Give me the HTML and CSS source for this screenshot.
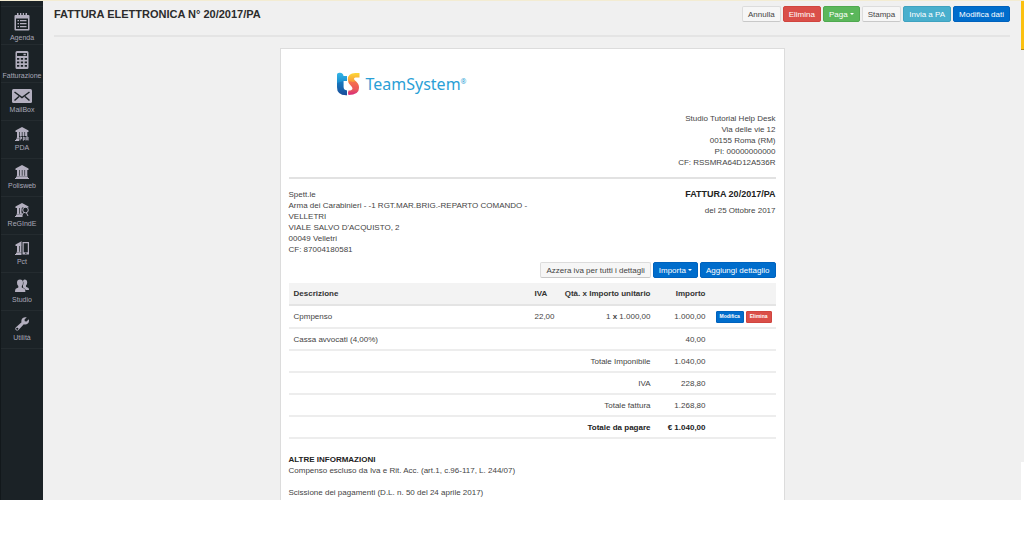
FILE: index.html
```html
<!DOCTYPE html>
<html lang="it">
<head>
<meta charset="utf-8">
<meta name="viewport" content="width=device-width, initial-scale=1">
<title>Fattura elettronica N° 20/2017/PA</title>
<link rel="stylesheet" href="styles.css">
</head>
<body>
<svg class="defs" aria-hidden="true">
  <symbol id="bank" viewBox="0 0 14 14">
    <path d="M7 0 13.500 3.500V5H.5V3.500zM1 12h12v1H1zM0 13h14v1H0zM2 5h2.200v6H2zM4.900 5h1.900v6H4.900zM7.500 5h1.900v6H7.500zM10.100 5h2.200v6h-2.200zM1.500 10.800h11v.9h-11z"/>
  </symbol>
</svg>
<div class="app">
  <nav class="sidebar" aria-label="Menu principale">
    <a class="nav-item" href="#agenda">
      <svg class="nav-icon tall" viewBox="0 0 16 18"><path fill-rule="evenodd" d="M3 0h1.500v2H6V0h1.300v2h1.500V0H10v2h1.500V0H13v2h1.500q1 0 1 1v13.500q0 1-1 1h-13q-1 0-1-1V3q0-1 1-1H3zM2 5.500V16h12V5.500zM3.500 7H5v1.300H3.500zM6 7h6.500v1.300H6zM3.500 10H5v1.300H3.500zM6 10h6.500v1.300H6zM3.500 13H5v1.300H3.500zM6 13h6.500v1.300H6z"/></svg>
      <span>Agenda</span>
    </a>
    <a class="nav-item" href="#fatturazione">
      <svg class="nav-icon tall" viewBox="0 0 16 18"><path fill-rule="evenodd" d="M3 0h10q1.500 0 1.500 1.500v15q0 1.500-1.500 1.500H3q-1.500 0-1.500-1.500v-15Q1.500 0 3 0zM3 2v3h10V2zM9.500 2.800h2.300v1.400H9.500zM3 7v1.800h2.300V7zM6.800 7v1.800h2.300V7zM10.700 7v1.800H13V7zM3 10.500v1.800h2.300v-1.800zM6.800 10.500v1.800h2.300v-1.800zM10.700 10.500v1.800H13v-1.800zM3 14v1.800h2.300V14zM6.800 14v1.800h2.300V14zM10.700 14v1.800H13V14z"/></svg>
      <span>Fatturazione</span>
    </a>
    <a class="nav-item" href="#mailbox">
      <svg class="nav-icon wide" viewBox="0 0 20 14"><rect width="20" height="14" rx="1.500"/><path class="cut" d="M2.500 3 10 8.500 17.500 3M2.500 11.500 7 7.500M17.500 11.500 13 7.500"/></svg>
      <span>MailBox</span>
    </a>
    <a class="nav-item" href="#pda">
      <svg class="nav-icon" viewBox="0 0 14 14"><use href="#bank"/><rect class="hole" x="4" y="9" width="10" height="5"/><path class="line" d="M5 13.500V10h1.500v1.800H5M8.300 13.500V10H9q1.300 1.700 0 3h-.7M11 13.500V10h2v3.500M11 12h2"/></svg>
      <span>PDA</span>
    </a>
    <a class="nav-item" href="#polisweb">
      <svg class="nav-icon" viewBox="0 0 14 14"><use href="#bank"/></svg>
      <span>Polisweb</span>
    </a>
    <a class="nav-item" href="#reginde">
      <svg class="nav-icon" viewBox="0 0 14 14"><use href="#bank"/><path class="hole" d="M7 4.500H14V14H7.500V11L6.500 9z"/><circle class="line" cx="10.500" cy="7" r="2.800"/><path class="line" d="M8.700 9.300 6 13.500M11.500 10l1.500 3"/></svg>
      <span>ReGIndE</span>
    </a>
    <a class="nav-item" href="#pct">
      <svg class="nav-icon" viewBox="0 0 14 14"><use href="#bank"/><rect class="hole" x="6.500" y="0" width="7.500" height="14"/><path fill-rule="evenodd" d="M7.500 1H14v12.500H7.500zM8.700 2.300v8.900h4.100V2.300zM10 11.800v.9h1.500v-.9z"/></svg>
      <span>Pct</span>
    </a>
    <a class="nav-item" href="#studio">
      <svg class="nav-icon" viewBox="0 0 14 14"><path d="M9.500.5q2.700 0 2.700 3 0 2-1.200 3v1.300l2.500 1.200q.5.500.5 2H9.500L8 8.500V2q.3-1.500 1.500-1.500z"/><path class="edge" d="M5 .5q3 0 3 3.300Q8 6 6.800 7v1.500l2.700 1.300q.9.700.9 3.200H0q0-2.500.7-3.200l2.600-1.300V7Q2 6 2 3.800 2 .5 5 .5z"/></svg>
      <span>Studio</span>
    </a>
    <a class="nav-item" href="#utilita">
      <svg class="nav-icon" viewBox="0 0 14 14"><path fill-rule="evenodd" d="M11.800.3 9.500 2.600l.3 1.700 1.700.3L13.800 2.300q.7 2.500-1 4.200-1.700 1.500-4 .8L3.500 13q-1.300 1-2.600 0-1.200-1.200-.2-2.600L6.500 5.200q-.6-2.200 1-3.900Q9.300-.3 11.800.3zM2.200 10.800a1 1 0 1 0 .1 0z"/></svg>
      <span>Utilità</span>
    </a>
  </nav>

  <main class="content">
    <header class="page-head">
      <h1 class="page-title">FATTURA ELETTRONICA N° 20/2017/PA</h1>
      <div class="actions">
        <button class="btn" type="button">Annulla</button>
        <button class="btn danger" type="button">Elimina</button>
        <button class="btn success" type="button">Paga <i class="caret"></i></button>
        <button class="btn" type="button">Stampa</button>
        <button class="btn info" type="button">Invia a PA</button>
        <button class="btn primary" type="button">Modifica dati</button>
      </div>
    </header>

    <article class="invoice">
      <div class="brand">
        <svg class="brand-mark" viewBox="0 0 24 24" aria-hidden="true">
          <defs>
            <linearGradient id="blue" x1="0" y1="0" x2="0" y2="1"><stop offset="0" stop-color="#35b6e6"/><stop offset=".5" stop-color="#1688cd"/><stop offset="1" stop-color="#1b4f9c"/></linearGradient>
            <linearGradient id="warm" x1="0" y1="0" x2="0" y2="1"><stop offset="0" stop-color="#fdd835"/><stop offset=".5" stop-color="#f68a3c"/><stop offset="1" stop-color="#d9277b"/></linearGradient>
          </defs>
          <path fill="url(#blue)" d="M1 2.500Q1 .5 4 .8q3.300.4 3.500 3.200H11v5H7.500v6q0 3 3.500 3.500v4.700Q1 23.500 1 15z"/>
          <path fill="#1a4a94" d="M1 11 7.500 9v6q0 3 3.500 3.500v4.700Q1 23.500 1 15z" opacity=".35"/>
          <path fill="url(#warm)" d="M23.500 1v4.500H19.500q-1.700 0-1.500 1.500.2 1 1.800 2.300 3.200 2.700 3.200 6.700 0 7-10.500 7-1-2 0-4.500 4 0 4-2.300 0-1.200-1.700-2.700-3-2.500-3-6 0-6.500 7.500-6.500z"/>
          <path fill="#ef4a62" d="M12.300 9.300Q14 9 17 10l2.800-.7q3.200 2.700 3.200 6.700l-6.500.2q0-1.200-1.700-2.700-1.700-1.700-2.500-4.200z" opacity=".5"/>
        </svg>
        <span class="brand-name">TeamSystem<sup>®</sup></span>
      </div>
      <address class="sender">
        Studio Tutorial Help Desk<br>
        Via delle vie 12<br>
        00155 Roma (RM)<br>
        PI: 00000000000<br>
        CF: RSSMRA64D12A536R
      </address>

      <section class="parties">
        <address class="customer">
          Spett.le<br>
          Arma dei Carabinieri - -1 RGT.MAR.BRIG.-REPARTO COMANDO -<br>
          VELLETRI<br>
          VIALE SALVO D'ACQUISTO, 2<br>
          00049 Velletri<br>
          CF: 87004180581
        </address>
        <div class="number">
          <h2 class="number-title">FATTURA 20/2017/PA</h2>
          <p class="number-date">del 25 Ottobre 2017</p>
        </div>
      </section>

      <div class="actions detail-actions">
        <button class="btn" type="button">Azzera iva per tutti i dettagli</button>
        <button class="btn primary" type="button">Importa <i class="caret"></i></button>
        <button class="btn primary" type="button">Aggiungi dettaglio</button>
      </div>

      <table class="lines">
        <colgroup><col><col class="col-vat"><col class="col-qty"><col class="col-amount"><col class="col-tools"></colgroup>
        <thead>
          <tr><th>Descrizione</th><th>IVA</th><th class="num">Qtà. x Importo unitario</th><th class="num">Importo</th><th></th></tr>
        </thead>
        <tbody>
          <tr class="item">
            <td>Cpmpenso</td><td>22,00</td><td class="num">1 <b>x</b> 1.000,00</td><td class="num">1.000,00</td>
            <td><div class="tools"><button class="btn mini primary" type="button">Modifica</button><button class="btn mini danger" type="button">Elimina</button></div></td>
          </tr>
          <tr><td>Cassa avvocati (4,00%)</td><td></td><td></td><td class="num">40,00</td><td></td></tr>
          <tr><td class="num" colspan="3">Totale Imponibile</td><td class="num">1.040,00</td><td></td></tr>
          <tr><td class="num" colspan="3">IVA</td><td class="num">228,80</td><td></td></tr>
          <tr><td class="num" colspan="3">Totale fattura</td><td class="num">1.268,80</td><td></td></tr>
          <tr class="due"><td class="num" colspan="3">Totale da pagare</td><td class="num">€ 1.040,00</td><td></td></tr>
        </tbody>
      </table>

      <section class="notes">
        <h3 class="notes-title">ALTRE INFORMAZIONI</h3>
        <p>Compenso escluso da Iva e Rit. Acc. (art.1, c.96-117, L. 244/07)</p>
        <p class="notes-gap">Scissione dei pagamenti (D.L. n. 50 del 24 aprile 2017)</p>
      </section>
    </article>
  </main>
  <div class="rail" aria-hidden="true"><div class="rail-tab"></div><div class="rail-end"></div></div>
</div>
</body>
</html>
```
FILE: styles.css
```css
* { box-sizing: border-box; }

body {
  margin: 0;
  background: #fff;
  color: #444;
  font: 8px/11px "Liberation Sans", Arial, sans-serif;
}

h1, h2, h3, p { margin: 0; }
address { font-style: normal; }
.defs { position: absolute; width: 0; height: 0; }

.app {
  display: flex;
  background: #f0f0f0;
  border-top: 1px solid #f3ecd2;
}

/* Sidebar */
.sidebar {
  flex: none;
  width: 43px;
  padding-top: 5px;
  background: #1b2226;
  border-left: 1px solid #12181b;
}

.nav-item {
  display: flex;
  flex-direction: column;
  align-items: center;
  gap: 1px;
  height: 38px;
  padding-top: 6px;
  border-top: 1px solid #242b2f;
  color: #a9a8b8;
  font-size: 7px;
  text-decoration: none;
  white-space: nowrap;
}
.nav-item:last-child { height: 39px; border-bottom: 1px solid #242b2f; }

.nav-icon { flex: none; width: 14px; height: 14px; fill: #b3afbf; }
.nav-icon.tall { width: 16px; height: 18px; }
.nav-icon.wide { width: 20px; }
.nav-icon .cut { fill: none; stroke: #1b2226; stroke-width: 1.5; }
.nav-icon .hole { fill: #1b2226; }
.nav-icon .line { fill: none; stroke: #b3afbf; stroke-width: 1; }
.nav-icon .edge { stroke: #1b2226; stroke-width: 1; paint-order: stroke; }

/* Page header */
.content { flex: 1; min-width: 0; padding: 0 11px; }

.page-head {
  display: flex;
  justify-content: space-between;
  align-items: flex-start;
  padding: 5px 0 13px;
  border-bottom: 2px solid #e4e4e4;
}

.page-title { color: #2b2b2b; font-size: 11px; line-height: 16px; }

.actions { display: flex; gap: 2px; }

.btn {
  display: inline-flex;
  align-items: center;
  gap: 2px;
  height: 16px;
  padding: 0 5px;
  border: 1px solid #dcdcdc;
  border-bottom-color: #c8c8c8;
  border-radius: 2px;
  background: #f6f6f6;
  color: #444;
  font: inherit;
  white-space: nowrap;
}
.btn.danger { background: #da4f49; border-color: #d0453f; color: #fff; }
.btn.success { background: #5bb75b; border-color: #4fa94f; color: #fff; }
.btn.info { background: #49afcd; border-color: #3fa2c0; color: #fff; }
.btn.primary { background: #006dcc; border-color: #0062bd; color: #fff; }
.btn.mini {
  height: 12px;
  padding: 0 3px;
  border-radius: 1px;
  font-size: 5px;
  font-weight: bold;
}

.caret {
  border: 2px solid transparent;
  border-top-color: currentColor;
  border-bottom: 0;
}

/* Invoice sheet */
.invoice {
  max-width: 505px;
  margin: 11px auto 0;
  padding: 23px 8px 2px;
  background: #fff;
  border: 1px solid #dcdcdc;
  border-bottom: 0;
}

.brand { display: flex; align-items: center; gap: 6px; padding-left: 47px; }
.brand-mark { flex: none; width: 24px; height: 24px; }
.brand-name {
  color: #2a9fd6;
  font: 16px/24px "Noto Sans", "Open Sans", sans-serif;
}
.brand-name sup { font-size: 7px; line-height: 7px; }

.sender {
  padding: 17px 0 9px;
  border-bottom: 2px solid #e2e2e2;
  text-align: right;
}

.parties { display: flex; justify-content: space-between; padding-top: 10px; }
.number { text-align: right; }
.number-title { color: #222; font-size: 9px; line-height: 11px; }
.number-date { margin-top: 5px; }

.detail-actions { justify-content: flex-end; padding: 7px 0 5px; }

.lines { width: 100%; border-spacing: 0; table-layout: fixed; }
.lines th, .lines td {
  height: 22px;
  padding: 0 5px;
  border-bottom: 2px solid #ededed;
  text-align: left;
  vertical-align: middle;
  white-space: nowrap;
}
.lines th { height: 23px; background: #f3f3f3; border-color: #e4e4e4; color: #333; }
.lines .item td { height: 23px; }
.lines .num { text-align: right; }
.lines .due { color: #222; font-weight: bold; }
.col-vat { width: 27px; }
.col-qty { width: 99px; }
.col-amount { width: 55px; }
.col-tools { width: 65px; }
.tools { display: flex; gap: 2px; }

.notes { padding-top: 15px; }
.notes-title { color: #222; font-size: 8px; line-height: 11px; }
.notes-gap { margin-top: 11px; }

/* Right edge */
.rail {
  flex: none;
  display: flex;
  flex-direction: column;
  justify-content: space-between;
  width: 3px;
}
.rail-tab { height: 49px; background: #fbc010; border-bottom: 1px solid #b08a1a; }
.rail-end { height: 38px; background: #fff; }
```
